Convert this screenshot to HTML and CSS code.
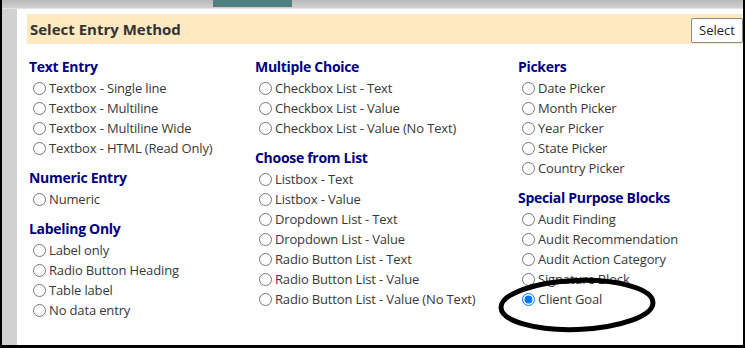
FILE: index.html
```html
<!DOCTYPE html>
<html lang="en">
<head>
    <meta charset="UTF-8">
    <meta name="viewport" content="width=device-width, initial-scale=1.0">
    <title>Select Entry Method</title>
    <link rel="stylesheet" href="styles.css">
</head>
<body>
    <div id="screen">
        <div class="topbar">
            <span class="tab"></span>
        </div>
        <div class="stage">
            <div class="dialog">
                <div class="dialog_head">
                    <h2>Select Entry Method</h2>
                    <button type="button" class="btn_select">Select</button>
                </div>

                <div class="columns">
                    <div class="col">
                        <h3>Text Entry</h3>
                        <label class="opt"><input type="radio" name="method">Textbox - Single line</label>
                        <label class="opt"><input type="radio" name="method">Textbox - Multiline</label>
                        <label class="opt"><input type="radio" name="method">Textbox - Multiline Wide</label>
                        <label class="opt"><input type="radio" name="method">Textbox - HTML (Read Only)</label>

                        <h3>Numeric Entry</h3>
                        <label class="opt"><input type="radio" name="method">Numeric</label>

                        <h3>Labeling Only</h3>
                        <label class="opt"><input type="radio" name="method">Label only</label>
                        <label class="opt"><input type="radio" name="method">Radio Button Heading</label>
                        <label class="opt"><input type="radio" name="method">Table label</label>
                        <label class="opt"><input type="radio" name="method">No data entry</label>
                    </div>

                    <div class="col">
                        <h3>Multiple Choice</h3>
                        <label class="opt"><input type="radio" name="method">Checkbox List - Text</label>
                        <label class="opt"><input type="radio" name="method">Checkbox List - Value</label>
                        <label class="opt"><input type="radio" name="method">Checkbox List - Value (No Text)</label>

                        <h3>Choose from List</h3>
                        <label class="opt"><input type="radio" name="method">Listbox - Text</label>
                        <label class="opt"><input type="radio" name="method">Listbox - Value</label>
                        <label class="opt"><input type="radio" name="method">Dropdown List - Text</label>
                        <label class="opt"><input type="radio" name="method">Dropdown List - Value</label>
                        <label class="opt"><input type="radio" name="method">Radio Button List - Text</label>
                        <label class="opt"><input type="radio" name="method">Radio Button List - Value</label>
                        <label class="opt"><input type="radio" name="method">Radio Button List - Value (No Text)</label>
                    </div>

                    <div class="col">
                        <h3>Pickers</h3>
                        <label class="opt"><input type="radio" name="method">Date Picker</label>
                        <label class="opt"><input type="radio" name="method">Month Picker</label>
                        <label class="opt"><input type="radio" name="method">Year Picker</label>
                        <label class="opt"><input type="radio" name="method">State Picker</label>
                        <label class="opt"><input type="radio" name="method">Country Picker</label>

                        <h3>Special Purpose Blocks</h3>
                        <label class="opt"><input type="radio" name="method">Audit Finding</label>
                        <label class="opt"><input type="radio" name="method">Audit Recommendation</label>
                        <label class="opt"><input type="radio" name="method">Audit Action Category</label>
                        <label class="opt"><input type="radio" name="method">Signature Block</label>
                        <label class="opt"><input type="radio" name="method" checked>Client Goal</label>
                    </div>
                </div>

                <!-- 손으로 그린 표시 -->
                <svg class="mark" width="164" height="60" viewBox="0 0 164 60">
                    <ellipse cx="82" cy="30" rx="76" ry="24.5" fill="none" stroke="#000" stroke-width="5" transform="rotate(-2 82 30)"/>
                </svg>
            </div>
        </div>
    </div>
</body>
</html>
```

FILE: styles.css
```css
* {
    margin: 0;
    padding: 0;
    box-sizing: border-box;
}

body {
    background: #fff;
}

#screen {
    width: 745px;
    height: 348px;
    display: flex;
    flex-direction: column;
    border-left: 2px solid #000;
    border-right: 2px solid #000;
    border-bottom: 3px solid #000;
    background: linear-gradient(to right, #d2d2d2, #a4a4a4);
    overflow: hidden;
}

.topbar {
    height: 9px;
    display: flex;
    background: linear-gradient(to bottom, #b9b9b9, #d0d0d0);
    border-bottom: 1px solid #e2e2e2;
}

.tab {
    width: 79px;
    height: 7px;
    margin-left: 211px;
    background: #4f7f7f;
}

.stage {
    flex: 1;
    display: flex;
    padding-left: 15px;
}

.dialog {
    flex: 1;
    position: relative;
    background: #fff;
    padding: 5px 0 0 10px;
}

.dialog_head {
    height: 30px;
    display: flex;
    align-items: center;
    justify-content: space-between;
    background: #ffe9c1;
    padding-left: 3px;
}

.dialog_head h2 {
    font-family: "Open Sans", sans-serif;
    font-size: 15px;
    font-weight: 700;
    color: #333;
}

.btn_select {
    width: 52px;
    height: 25px;
    margin-top: 2px;
    border: 1px solid #8a8a8a;
    border-radius: 2px;
    background: #fff;
    font-family: "Open Sans", sans-serif;
    font-size: 13px;
    color: #222;
}

.columns {
    display: grid;
    grid-template-columns: 226px 263px 1fr;
    padding: 13px 0 0 1px;
}

.col h3 {
    height: 20px;
    line-height: 20px;
    margin: 10px 0 1px 1px;
    font-family: "Open Sans", sans-serif;
    font-size: 14px;
    font-weight: 700;
    letter-spacing: -0.3px;
    color: #000080;
}

.col h3:first-child {
    margin-top: 0;
}

.opt {
    display: flex;
    align-items: center;
    height: 20px;
    font-family: "Open Sans", sans-serif;
    font-size: 13px;
    letter-spacing: -0.15px;
    color: #383838;
    white-space: nowrap;
}

.opt input {
    width: 13px;
    height: 13px;
    margin: 0 3px 0 5px;
}

.mark {
    position: absolute;
    left: 478px;
    top: 266px;
}
```
